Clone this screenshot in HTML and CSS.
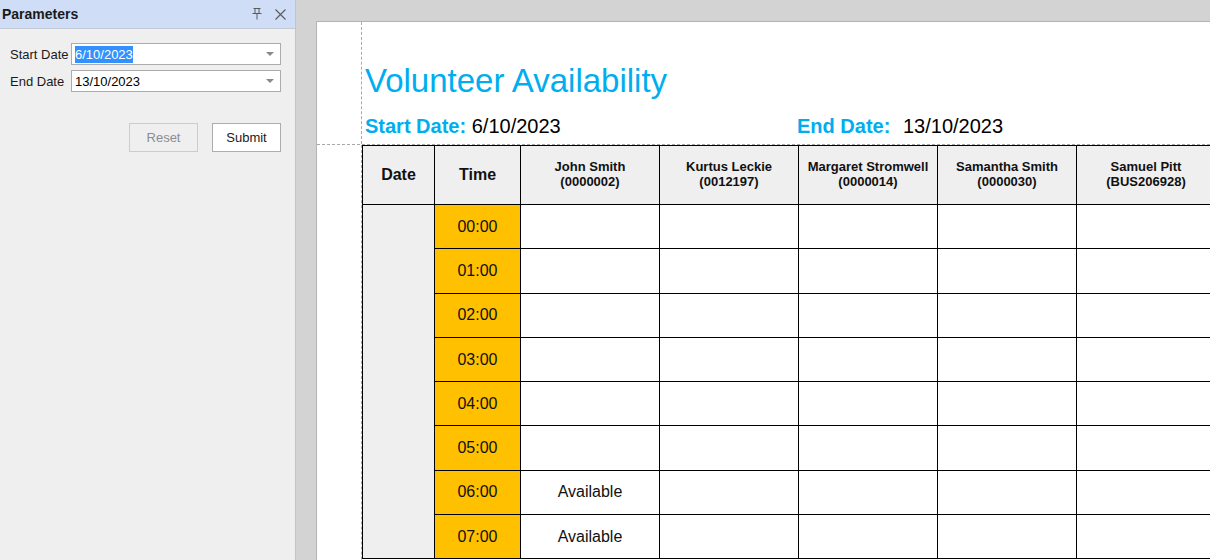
FILE: index.html
```html
<!DOCTYPE html>
<html>
<head>
<meta charset="utf-8">
<link rel="stylesheet" href="styles.css">
</head>
<body>
<aside class="params">
  <div class="params-head">
    <span class="params-title">Parameters</span>
    <span class="head-icons">
      <svg class="ico" width="10" height="12" viewBox="0 0 10 12"><path d="M1.5 0.5h7M3 0.5v5M7 0.5v5M0.5 5.5h9M5 5.5v6" fill="none" stroke="#5a5a5a" stroke-width="1"/></svg>
      <svg class="ico close" width="11" height="11" viewBox="0 0 11 11"><path d="M0.5 0.5l10 10M10.5 0.5l-10 10" fill="none" stroke="#5a5a5a" stroke-width="1.1"/></svg>
    </span>
  </div>
  <div class="params-form">
    <label class="lbl">Start Date</label>
    <div class="combo"><span class="sel">6/10/2023</span><span class="arrow"></span></div>
    <label class="lbl">End Date</label>
    <div class="combo"><span>13/10/2023</span><span class="arrow"></span></div>
  </div>
  <div class="params-buttons">
    <button class="btn disabled">Reset</button>
    <button class="btn">Submit</button>
  </div>
</aside>
<main class="viewer">
  <div class="page">
    <div class="page-head">
      <div class="page-head-inner">
        <h1 class="title">Volunteer Availability</h1>
        <div class="dates">
          <div class="date-start"><span class="dlbl">Start Date:</span> <span class="dval">6/10/2023</span></div>
          <div class="date-end"><span class="dlbl end-lbl">End Date:</span><span class="dval">13/10/2023</span></div>
        </div>
      </div>
    </div>
    <div class="page-body">
      <table class="grid">
        <colgroup>
          <col class="c-date"><col class="c-time"><col class="c-vol"><col class="c-vol"><col class="c-vol"><col class="c-vol"><col class="c-vol">
        </colgroup>
        <thead>
          <tr>
            <th class="big">Date</th>
            <th class="big">Time</th>
            <th>John Smith<br>(0000002)</th>
            <th>Kurtus Leckie<br>(0012197)</th>
            <th>Margaret Stromwell<br>(0000014)</th>
            <th>Samantha Smith<br>(0000030)</th>
            <th>Samuel Pitt<br>(BUS206928)</th>
          </tr>
        </thead>
        <tbody>
          <tr><td class="date" rowspan="8"></td><td class="time">00:00</td><td></td><td></td><td></td><td></td><td></td></tr>
          <tr><td class="time">01:00</td><td></td><td></td><td></td><td></td><td></td></tr>
          <tr><td class="time">02:00</td><td></td><td></td><td></td><td></td><td></td></tr>
          <tr><td class="time">03:00</td><td></td><td></td><td></td><td></td><td></td></tr>
          <tr><td class="time">04:00</td><td></td><td></td><td></td><td></td><td></td></tr>
          <tr><td class="time">05:00</td><td></td><td></td><td></td><td></td><td></td></tr>
          <tr><td class="time">06:00</td><td>Available</td><td></td><td></td><td></td><td></td></tr>
          <tr><td class="time">07:00</td><td>Available</td><td></td><td></td><td></td><td></td></tr>
        </tbody>
      </table>
    </div>
  </div>
</main>
</body>
</html>
```
FILE: styles.css
```css
html, body {
  margin: 0;
  padding: 0;
}
body {
  width: 1210px;
  height: 560px;
  overflow: hidden;
  display: flex;
  font-family: "Liberation Sans", Arial, sans-serif;
  color: #000;
}
.params {
  width: 295px;
  flex-shrink: 0;
  background: #efefef;
  border-right: 1px solid #c4c4c4;
  display: flex;
  flex-direction: column;
}
.params-head {
  height: 28px;
  background: #cfddf6;
  border-bottom: 1px solid #c4c8d0;
  display: flex;
  align-items: center;
  justify-content: space-between;
  padding-left: 2px;
}
.params-title {
  font-weight: bold;
  font-size: 14px;
  color: #1a1a1a;
}
.head-icons {
  display: flex;
  align-items: center;
  gap: 13px;
  padding-right: 9px;
}
.ico {
  display: block;
}
.params-form {
  display: grid;
  grid-template-columns: 61px 210px;
  row-gap: 5px;
  padding: 14px 0 0 10px;
  font-size: 13px;
}
.lbl {
  display: flex;
  align-items: center;
  color: #1a1a1a;
}
.combo {
  height: 20px;
  border: 1px solid #acacac;
  background: #fff;
  display: flex;
  align-items: center;
  justify-content: space-between;
  padding: 0 6px 0 3px;
}
.sel {
  background: #3391ff;
  color: #fff;
  line-height: 17px;
}
.arrow {
  width: 0;
  height: 0;
  border-left: 4px solid transparent;
  border-right: 4px solid transparent;
  border-top: 4px solid #8a8a8a;
}
.params-buttons {
  display: flex;
  justify-content: flex-end;
  gap: 14px;
  padding: 31px 14px 0 0;
}
.btn {
  width: 69px;
  height: 29px;
  background: #fff;
  border: 1px solid #adadad;
  font-family: "Liberation Sans", Arial, sans-serif;
  font-size: 13px;
  color: #1a1a1a;
  padding: 0;
}
.btn.disabled {
  background: #efefef;
  border-color: #cccccc;
  color: #8d8d8d;
}
.viewer {
  flex: 1;
  background: #d3d3d3;
  padding: 21px 0 0 20px;
  overflow: hidden;
  display: flex;
}
.page {
  flex: 1;
  background: #fff;
  border-left: 1px solid #b4b4b4;
  border-top: 1px solid #b4b4b4;
  overflow: hidden;
}
.page-head {
  height: 122px;
  border-bottom: 1px dashed #a8a8a8;
}
.page-head-inner {
  margin-left: 44px;
  height: 100%;
  border-left: 1px dashed #a8a8a8;
  padding-left: 3px;
  box-sizing: border-box;
  padding-top: 42px;
}
.title {
  margin: 0;
  font-weight: normal;
  font-size: 33px;
  line-height: 33px;
  color: #00aeef;
}
.dates {
  display: flex;
  margin-top: 19px;
  font-size: 20px;
  line-height: 20px;
  white-space: nowrap;
}
.date-start {
  width: 432px;
}
.dlbl {
  color: #00aeef;
  font-weight: bold;
}
.end-lbl {
  display: inline-block;
  width: 106px;
}
.page-body {
  margin-left: 44px;
  border-left: 1px dashed #a8a8a8;
  height: 500px;
}
.grid {
  border-collapse: collapse;
  table-layout: fixed;
  width: 854px;
}
.c-date { width: 72px; }
.c-time { width: 86px; }
.c-vol { width: 139px; }
.grid th, .grid td {
  border: 1px solid #000;
  padding: 0;
  text-align: center;
  vertical-align: middle;
}
.grid th {
  background: #efefef;
  height: 56px;
  padding-bottom: 2px;
  font-size: 13px;
  line-height: 15px;
  font-weight: bold;
  color: #111;
}
.grid th.big {
  font-size: 16px;
}
.grid td {
  height: 43.3px;
  font-size: 16px;
  color: #111;
}
.grid td.date {
  background: #efefef;
}
.grid td.time {
  background: #ffc000;
}
```
